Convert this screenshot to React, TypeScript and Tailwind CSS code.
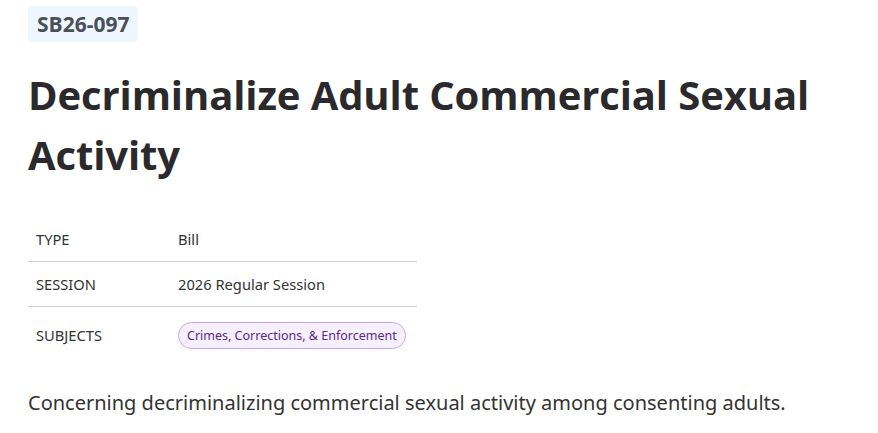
import React from 'react';

const rows = [
  { label: 'TYPE', value: 'Bill' },
  { label: 'SESSION', value: '2026 Regular Session' },
];

export default function App() {
  return (
    <div className="min-h-screen bg-white px-7 pt-1.5 font-['Noto_Sans',sans-serif] text-[#2b2b2b]">
      {/* Bill number chip */}
      <span className="inline-block rounded-[4px] bg-[#eef6ff] px-[9px] py-[3px] font-['Open_Sans',sans-serif] text-[21px] font-bold leading-[30px] text-[#4b4f58]">
        SB26-097
      </span>

      <h1 className="mt-[23px] font-['Open_Sans',sans-serif] text-[40px] font-bold leading-[60px] tracking-[-0.1px] text-[#2a2a2c]">
        Decriminalize Adult Commercial Sexual Activity
      </h1>

      <table className="mt-[31px] w-[389px] border-collapse text-[14.7px]">
        <tbody>
          {rows.map((r) => (
            <tr key={r.label} className="border-b border-[#cfcfcf]">
              <td className="h-[45px] w-[150px] pl-2 pt-[2px] align-middle text-[#333]">{r.label}</td>
              <td className="h-[45px] pt-[2px] align-middle text-[#333]">{r.value}</td>
            </tr>
          ))}
          <tr>
            <td className="h-[58px] pl-2 align-middle text-[#333]">SUBJECTS</td>
            <td className="h-[58px] align-middle">
              <span className="inline-block rounded-full border border-[#c9a4ee] bg-[#f6effd] px-2 py-[3px] text-[12.5px] leading-[19px] text-[#5a2a8a]">
                Crimes, Corrections, &amp; Enforcement
              </span>
            </td>
          </tr>
        </tbody>
      </table>

      <p className="mt-[24px] text-[20px] leading-[30px] text-[#333]">
        Concerning decriminalizing commercial sexual activity among consenting adults.
      </p>
    </div>
  );
}
